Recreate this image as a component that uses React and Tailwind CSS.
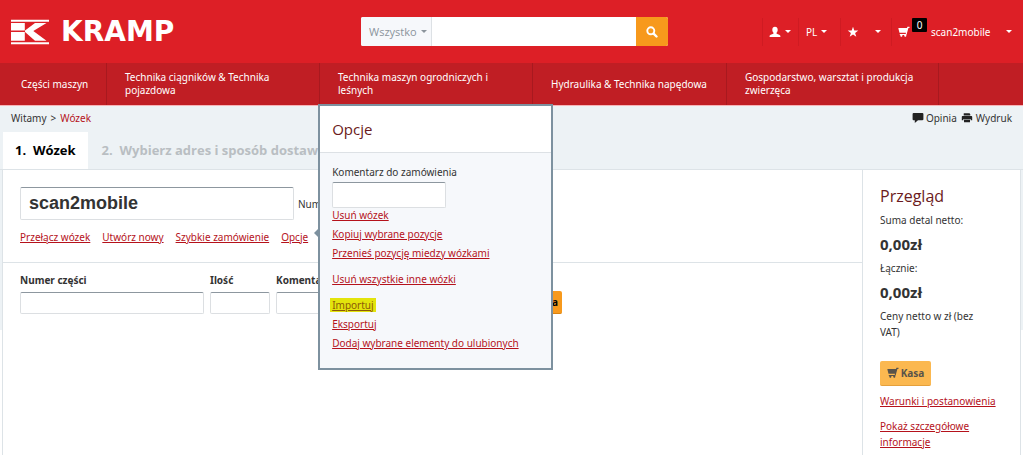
import React from "react";

const Caret = ({ className = "" }) => (
  <svg aria-hidden="true" viewBox="0 0 6 3" className={"h-[3px] w-[6px] shrink-0 fill-current " + className}>
    <path d="M0 0h6L3 3z" />
  </svg>
);

const CartIcon = ({ className = "" }) => (
  <svg aria-hidden="true" viewBox="0 0 12 12" className={"h-3 w-3 shrink-0 fill-current " + className}>
    <path d="M11.500 .8H9.400L9 2H.7c-.2 0-.3.2-.3.4l1 4c.1.300.3.400.5.400h6.100L7.700 8H2.200c-.7 0-.7 1.100 0 1.100h.2a1.100 1.100 0 1 0 1.900 0h2a1.100 1.100 0 1 0 1.900-.1c.2-.1.300-.2.400-.5l1.800-6.600h1.100z" />
  </svg>
);

const UserIcon = () => (
  <svg aria-hidden="true" viewBox="0 0 12 12" className="h-3 w-3 fill-current">
    <path d="M6 .8c1.700 0 2.700 1.200 2.700 2.900 0 1.300-.5 2.500-1.200 3.100v.8c.4.600 3.900 1 3.900 2.700v.8H.6v-.8c0-1.700 3.500-2.100 3.900-2.700v-.8C3.800 6.200 3.300 5 3.300 3.700 3.300 2 4.300.8 6 .8z" />
  </svg>
);

const StarIcon = () => (
  <svg aria-hidden="true" viewBox="0 0 12 12" className="h-3 w-3 fill-current">
    <path d="M6 .7l1.300 3.800h4L8.100 6.900l1.200 3.900L6 8.500l-3.300 2.300 1.200-3.900L.7 4.500h4z" />
  </svg>
);

const SearchIcon = () => (
  <svg aria-hidden="true" viewBox="0 0 12 12" className="h-3 w-3 fill-none stroke-white">
    <circle cx="4.800" cy="4.800" r="3.500" strokeWidth="1.900" />
    <path d="M7.600 7.600l2.900 2.900" strokeWidth="2.400" strokeLinecap="round" />
  </svg>
);

const CommentIcon = () => (
  <svg aria-hidden="true" viewBox="0 0 12 12" className="h-3 w-3 fill-[#222]">
    <path d="M1.500 1h9c.5 0 .9.4.9.9v5.400c0 .5-.4.9-.9.900H6L2.800 11V8.200H1.500a.9.9 0 0 1-.9-.9V1.900c0-.5.4-.9.900-.9z" />
  </svg>
);

const PrintIcon = () => (
  <svg aria-hidden="true" viewBox="0 0 12 12" className="h-3 w-3 fill-[#222]">
    <path d="M3 1.300h5.500l.8.900v1.300H2.700V1.600zM1.800 4h8.400c.6 0 1 .4 1 1v3.200H9.600V7H2.400v1.200H.8V5c0-.6.4-1 1-1zM3 7.600h6v2.700H3z" />
  </svg>
);

const Logo = () => (
  <a href="#" aria-label="Kramp" className="flex items-center gap-3 text-white">
    <svg aria-hidden="true" viewBox="0 0 38 26" className="h-[26px] w-[38px] shrink-0 fill-white">
      <path d="M0 .7h38v2H0zM0 23.300h38v2H0zM0 4h13.800v7.400H0zM0 12.900h13.800v8.800H0zM14 11.400L24 4h11.500L22.300 12.100 35.500 21.700H24L14 12.900z" />
    </svg>
    <span className="font-['DejaVu_Sans'] text-[28px] font-bold leading-[26px]">KRAMP</span>
  </a>
);

const categories = [
  ["Części maszyn", "w-[104px]"],
  ["Technika ciągników & Technika pojazdowa", "w-[213px]"],
  ["Technika maszyn ogrodniczych i leśnych", "w-[213px]"],
  ["Hydraulika & Technika napędowa", "w-[194px]"],
  ["Gospodarstwo, warsztat i produkcja zwierzęca", "w-[212px]"],
];

const link = "text-[#b5121b] underline";
const field = "rounded-[2px] border border-[#dcdfe2] border-t-[#8d979f] bg-white outline-none";
const menu = "flex h-7 items-center border-l border-[#cf1b22]";

const OptionLink = ({ children, className = "" }) => (
  <li className={className}>
    <a href="#" className={link}>{children}</a>
  </li>
);

function OptionsPanel() {
  return (
    <div className="absolute -top-[125px] left-full z-10 ml-[10px]">
      <span className="absolute -left-1 top-[124px] size-0 border-y-[5px] border-r-[5px] border-y-transparent border-r-[#7d919f]" />
      <section className="min-h-[266px] w-[235px] border-2 border-[#7d919f] bg-[#f6f8fb]">
        <h2 className="border-b border-[#dde1e5] bg-white px-3 py-3 font-['Open_Sans'] text-[15px] leading-[22px] text-[#6b1a20]">Opcje</h2>
        <div className="px-3 pt-3 leading-[14px]">
          <label htmlFor="order-comment" className="block">Komentarz do zamówienia</label>
          <input id="order-comment" className={"mt-[3px] block h-[26px] w-[114px] px-2 " + field} />
          <ul className="flex flex-col gap-[5px]">
            <OptionLink>Usuń wózek</OptionLink>
            <OptionLink>Kopiuj wybrane pozycje</OptionLink>
            <OptionLink>Przenieś pozycję miedzy wózkami</OptionLink>
            <OptionLink className="pt-[7px]">Usuń wszystkie inne wózki</OptionLink>
            <li className="flex pt-[7px]">
              <a href="#" className="-mx-[2px] bg-[#e3e40c] px-[2px] text-[#8c5a08] underline">Importuj</a>
            </li>
            <OptionLink>Eksportuj</OptionLink>
            <OptionLink>Dodaj wybrane elementy do ulubionych</OptionLink>
          </ul>
        </div>
      </section>
    </div>
  );
}

export default function App() {
  return (
    <div className="flex min-h-screen flex-col overflow-x-hidden bg-white font-['Noto_Sans',sans-serif] text-[10px] leading-4 text-[#333]">
      <header className="grid h-[63px] grid-cols-[1fr_307px_1fr] items-center bg-[#dd1f26] pl-[11px] pr-[5px] text-white">
        <Logo />
        <form className="flex h-[29px] overflow-hidden rounded-[2px] bg-white" onSubmit={(e) => e.preventDefault()}>
          <div className="relative flex w-[71px] border-r border-[#dde1e5] bg-[#f6f8fb] text-[#8b949c]">
            <select aria-label="Kategoria" className="w-full appearance-none bg-transparent pl-2 font-['Open_Sans'] text-[11px] outline-none">
              <option>Wszystko</option>
            </select>
            <Caret className="pointer-events-none absolute right-1 top-[13px]" />
          </div>
          <input aria-label="Szukaj" className="min-w-0 flex-1 px-2 text-[#333] outline-none" />
          <button aria-label="Szukaj" className="flex w-8 items-center justify-center bg-[#f7991c]">
            <SearchIcon />
          </button>
        </form>
        <div className="flex justify-end">
          <button aria-label="Konto" className={menu + " w-9 gap-1 pl-[6px]"}><UserIcon /><Caret /></button>
          <button className={menu + " w-[42px] gap-1 pl-[7px]"}>PL <Caret /></button>
          <button aria-label="Ulubione" className={menu + " w-[51px] justify-between pl-[6px] pr-[10px]"}><StarIcon /><Caret /></button>
          <button className={menu + " w-[127px] px-[6px]"}>
            <CartIcon />
            <span className="mb-[14px] ml-[2px] flex h-[14px] w-[15px] items-center justify-center rounded-[1px] bg-black">0</span>
            <span className="ml-1">scan2mobile</span>
            <Caret className="ml-auto" />
          </button>
        </div>
      </header>

      <nav className="flex h-[43px] border-b border-[#f7b4b7] bg-[#c01e24] pl-[3px] text-white">
        {categories.map(([name, width]) => (
          <a key={name} href="#" className={"flex items-center border-r border-[#a8191f] pl-[18px] pr-3 leading-[13px] " + width}>
            {name}
          </a>
        ))}
      </nav>

      <div className="flex h-[63px] flex-col justify-between bg-[#edf2f5] pl-[3px] pr-[11px]">
        <div className="flex items-center justify-between pl-2 pt-1">
          <p className="flex gap-1">Witamy <span>&gt;</span> <a href="#" className="text-[#b5121b]">Wózek</a></p>
          <div className="flex gap-1">
            <a href="#" className="flex items-center gap-[2px]"><CommentIcon />Opinia</a>
            <a href="#" className="flex items-center gap-[3px]"><PrintIcon />Wydruk</a>
          </div>
        </div>
        <div className="flex font-['Open_Sans'] text-[13px] font-bold leading-[37px]">
          <a href="#" className="whitespace-pre bg-white px-3 text-black">1.  Wózek</a>
          <a href="#" className="whitespace-pre px-[14px] text-[#b9bec2]">2.  Wybierz adres i sposób dostawy</a>
        </div>
      </div>

      <div className="flex flex-1 border-t border-[#dde3e7] bg-[linear-gradient(#edf2f5,#edf2f5)] bg-[length:100%_160px] bg-no-repeat px-[2px]">
        <main className="flex-1 border-l border-[#dde3e7] bg-white">
          <section className="border-b border-[#dde3e7] px-[17px] pb-[17px] pt-[17px]">
            <div className="flex items-center gap-1">
              <input aria-label="Nazwa wózka" defaultValue="scan2mobile" className={"h-[33px] w-[274px] px-2 font-['Liberation_Sans'] text-[18px] font-bold " + field} />
              <span>Numer zamówienia</span>
            </div>
            <div className="mt-[9px] flex gap-3">
              <a href="#" className={link}>Przełącz wózek</a>
              <a href="#" className={link}>Utwórz nowy</a>
              <a href="#" className={link}>Szybkie zamówienie</a>
              <div className="relative">
                <a href="#" className={link}>Opcje</a>
                <OptionsPanel />
              </div>
            </div>
          </section>
          <form className="flex items-end gap-[6px] px-[17px] pt-[9px] font-bold" onSubmit={(e) => e.preventDefault()}>
            <label className="flex w-[184px] flex-col gap-1">Numer części<input className={"h-[22px] px-2 font-normal " + field} /></label>
            <label className="flex w-[60px] flex-col gap-1">Ilość<input className={"h-[22px] w-full px-2 font-normal " + field} /></label>
            <label className="flex w-[160px] flex-col gap-1">Komentarz<input className={"h-[22px] px-2 font-normal " + field} /></label>
            <button className="h-[23px] w-[120px] rounded-[2px] border-b border-[#d9820f] bg-[#f7991c] pr-1 text-right text-black">Dodaj do wózka</button>
          </form>
        </main>
        <aside className="w-[159px] border-x border-[#dde3e7] bg-white pl-[17px] pr-7 pt-[14px]">
          <h2 className="font-['Open_Sans'] text-[16px] leading-6 text-[#6b1a20]">Przegląd</h2>
          <p className="mt-1">Suma detal netto:</p>
          <p className="my-2 text-[15px] font-bold leading-4">0,00zł</p>
          <p>Łącznie:</p>
          <p className="my-2 text-[15px] font-bold leading-4">0,00zł</p>
          <p>Ceny netto w zł (bez VAT)</p>
          <button className="mt-[21px] flex h-[25px] w-[51px] items-center justify-center gap-[2px] rounded-[2px] border-b border-[#e5a03c] bg-[#fbb850] font-bold text-[#59534a]">
            <CartIcon />Kasa
          </button>
          <p className="mt-[7px] whitespace-nowrap"><a href="#" className={link}>Warunki i postanowienia</a></p>
          <p className="mt-[9px]"><a href="#" className={link}>Pokaż szczegółowe informacje</a></p>
        </aside>
      </div>
    </div>
  );
}
